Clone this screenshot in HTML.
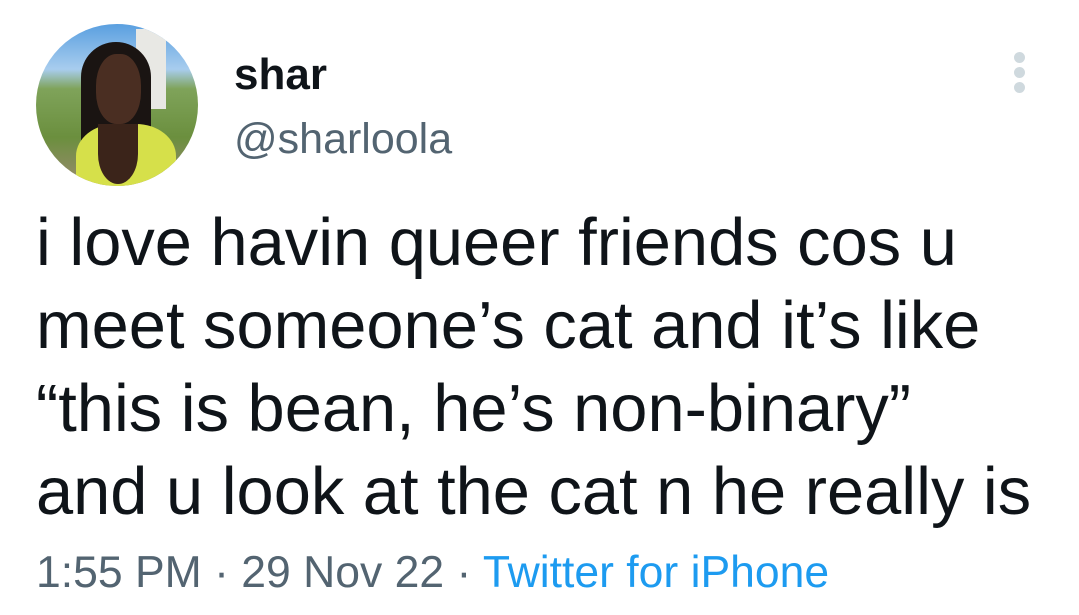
<!DOCTYPE html>
<html><head><meta charset="utf-8"><style>
body{margin:0;width:1079px;height:615px;background:#fff;font-family:"Liberation Sans",sans-serif;position:relative;overflow:hidden}
.av{position:absolute;left:36px;top:24px;width:162px;height:162px;border-radius:50%;overflow:hidden;background:linear-gradient(180deg,#5a9fe0 0%,#a8cdee 28%,#7fa35a 40%,#6b8f3e 70%,#9a8a70 100%)}
.t{position:absolute;white-space:nowrap}
.dot{position:absolute;left:1014px;width:11px;height:11px;border-radius:50%;background:#cfd9de}
</style></head><body>
<div class="av">
<div style="position:absolute;left:100px;top:5px;width:30px;height:80px;background:#e8e8e4"></div>
<div style="position:absolute;left:45px;top:18px;width:70px;height:120px;background:#1a1412;border-radius:35px 35px 10px 10px"></div>
<div style="position:absolute;left:60px;top:30px;width:45px;height:70px;background:#4a2e22;border-radius:45%"></div>
<div style="position:absolute;left:40px;top:100px;width:100px;height:80px;background:#d6e04a;border-radius:40% 40% 0 0"></div>
<div style="position:absolute;left:62px;top:100px;width:40px;height:60px;background:#3b241a;border-radius:0 0 50% 50%"></div>
</div>
<div class="t" style="left:234px;top:50px;font-size:44px;font-weight:bold;color:#0f1419">shar</div>
<div class="t" style="left:234px;top:115px;font-size:43px;color:#536471">@sharloola</div>
<div class="dot" style="top:52px"></div><div class="dot" style="top:67px"></div><div class="dot" style="top:82px"></div>
<div class="t" style="left:36px;top:202px;font-size:66.8px;line-height:83px;color:#0f1419">i love havin queer friends cos u<br>meet someone’s cat and it’s like<br>“this is bean, he’s non-binary”<br>and u look at the cat n he really is</div>
<div class="t" style="left:36px;top:548px;font-size:44.5px;color:#536471">1:55 PM · 29 Nov 22 · <span style="color:#1d9bf0">Twitter for iPhone</span></div>
</body></html>
